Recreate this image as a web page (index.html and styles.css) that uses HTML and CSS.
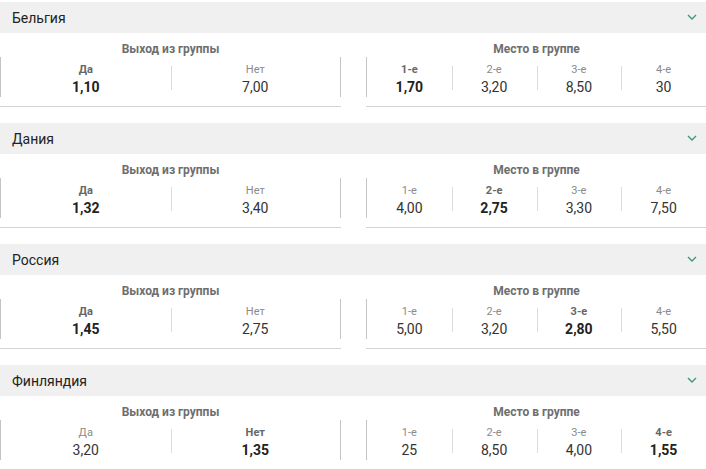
FILE: index.html
```html
<!DOCTYPE html>
<html lang="ru">
<head>
<meta charset="utf-8">
<link rel="stylesheet" href="styles.css">
</head>
<body>
<div class="page">

<section class="group">
  <div class="group-head"><span class="team">Бельгия</span><svg class="chev" width="10" height="6" viewBox="0 0 10 6"><path d="M1 1 L5 5 L9 1" fill="none" stroke="#3e9a74" stroke-width="1.4"/></svg></div>
  <div class="markets">
    <div class="market">
      <div class="m-title">Выход из группы</div>
      <div class="m-row two">
        <div class="cell fav"><span class="lbl">Да</span><span class="val">1,10</span></div>
        <div class="cell"><span class="lbl">Нет</span><span class="val">7,00</span></div>
      </div>
    </div>
    <div class="market">
      <div class="m-title">Место в группе</div>
      <div class="m-row four">
        <div class="cell fav"><span class="lbl">1-е</span><span class="val">1,70</span></div>
        <div class="cell"><span class="lbl">2-е</span><span class="val">3,20</span></div>
        <div class="cell"><span class="lbl">3-е</span><span class="val">8,50</span></div>
        <div class="cell"><span class="lbl">4-е</span><span class="val">30</span></div>
      </div>
    </div>
  </div>
</section>

<section class="group">
  <div class="group-head"><span class="team">Дания</span><svg class="chev" width="10" height="6" viewBox="0 0 10 6"><path d="M1 1 L5 5 L9 1" fill="none" stroke="#3e9a74" stroke-width="1.4"/></svg></div>
  <div class="markets">
    <div class="market">
      <div class="m-title">Выход из группы</div>
      <div class="m-row two">
        <div class="cell fav"><span class="lbl">Да</span><span class="val">1,32</span></div>
        <div class="cell"><span class="lbl">Нет</span><span class="val">3,40</span></div>
      </div>
    </div>
    <div class="market">
      <div class="m-title">Место в группе</div>
      <div class="m-row four">
        <div class="cell"><span class="lbl">1-е</span><span class="val">4,00</span></div>
        <div class="cell fav"><span class="lbl">2-е</span><span class="val">2,75</span></div>
        <div class="cell"><span class="lbl">3-е</span><span class="val">3,30</span></div>
        <div class="cell"><span class="lbl">4-е</span><span class="val">7,50</span></div>
      </div>
    </div>
  </div>
</section>

<section class="group">
  <div class="group-head"><span class="team">Россия</span><svg class="chev" width="10" height="6" viewBox="0 0 10 6"><path d="M1 1 L5 5 L9 1" fill="none" stroke="#3e9a74" stroke-width="1.4"/></svg></div>
  <div class="markets">
    <div class="market">
      <div class="m-title">Выход из группы</div>
      <div class="m-row two">
        <div class="cell fav"><span class="lbl">Да</span><span class="val">1,45</span></div>
        <div class="cell"><span class="lbl">Нет</span><span class="val">2,75</span></div>
      </div>
    </div>
    <div class="market">
      <div class="m-title">Место в группе</div>
      <div class="m-row four">
        <div class="cell"><span class="lbl">1-е</span><span class="val">5,00</span></div>
        <div class="cell"><span class="lbl">2-е</span><span class="val">3,20</span></div>
        <div class="cell fav"><span class="lbl">3-е</span><span class="val">2,80</span></div>
        <div class="cell"><span class="lbl">4-е</span><span class="val">5,50</span></div>
      </div>
    </div>
  </div>
</section>

<section class="group">
  <div class="group-head"><span class="team">Финляндия</span><svg class="chev" width="10" height="6" viewBox="0 0 10 6"><path d="M1 1 L5 5 L9 1" fill="none" stroke="#3e9a74" stroke-width="1.4"/></svg></div>
  <div class="markets">
    <div class="market">
      <div class="m-title">Выход из группы</div>
      <div class="m-row two">
        <div class="cell"><span class="lbl">Да</span><span class="val">3,20</span></div>
        <div class="cell fav"><span class="lbl">Нет</span><span class="val">1,35</span></div>
      </div>
    </div>
    <div class="market">
      <div class="m-title">Место в группе</div>
      <div class="m-row four">
        <div class="cell"><span class="lbl">1-е</span><span class="val">25</span></div>
        <div class="cell"><span class="lbl">2-е</span><span class="val">8,50</span></div>
        <div class="cell"><span class="lbl">3-е</span><span class="val">4,00</span></div>
        <div class="cell fav"><span class="lbl">4-е</span><span class="val">1,55</span></div>
      </div>
    </div>
  </div>
</section>

</div>
</body>
</html>
```

FILE: styles.css
```css
html, body {
  margin: 0;
  padding: 0;
  background: #ffffff;
  overflow: hidden;
}
body {
  font-family: Roboto, "Liberation Sans", sans-serif;
  color: #333;
}
.page {
  width: 706px;
  padding-top: 2px;
}
.group {
  margin-bottom: 16px;
}
.group-head {
  height: 31px;
  background: #f0f0f0;
  display: flex;
  align-items: center;
  justify-content: space-between;
  padding: 0 9px 0 12px;
}
.team {
  font-size: 14px;
  color: #222;
}
.chev {
  display: block;
  margin-top: -1px;
}
.markets {
  display: grid;
  grid-template-columns: 341px 341px;
  column-gap: 25px;
}
.market {
  border-bottom: 1px solid #d4d4d4;
  padding-bottom: 9px;
}
.m-title {
  padding-top: 8px;
  height: 16px;
  line-height: 16px;
  text-align: center;
  font-size: 12px;
  font-weight: 700;
  color: #6e6e6e;
}
.m-row {
  display: grid;
  height: 40px;
  border-left: 1px solid #c4c4c4;
  border-right: 1px solid #c4c4c4;
}
.m-row.two { grid-template-columns: 1fr 1fr; }
.m-row.four { grid-template-columns: repeat(4, 1fr); }
.cell {
  position: relative;
  display: flex;
  flex-direction: column;
  align-items: center;
  padding-top: 6px;
}
.cell + .cell::before {
  content: "";
  position: absolute;
  left: 0;
  top: 9px;
  height: 24px;
  border-left: 1px solid #dcdcdc;
}
.lbl {
  font-size: 11px;
  line-height: 14px;
  color: #8a8a8a;
}
.val {
  margin-top: 2px;
  font-size: 14px;
  line-height: 16px;
  color: #333;
}
.fav .lbl {
  font-weight: 700;
  color: #666;
}
.fav .val {
  font-weight: 700;
  color: #222;
}
```
